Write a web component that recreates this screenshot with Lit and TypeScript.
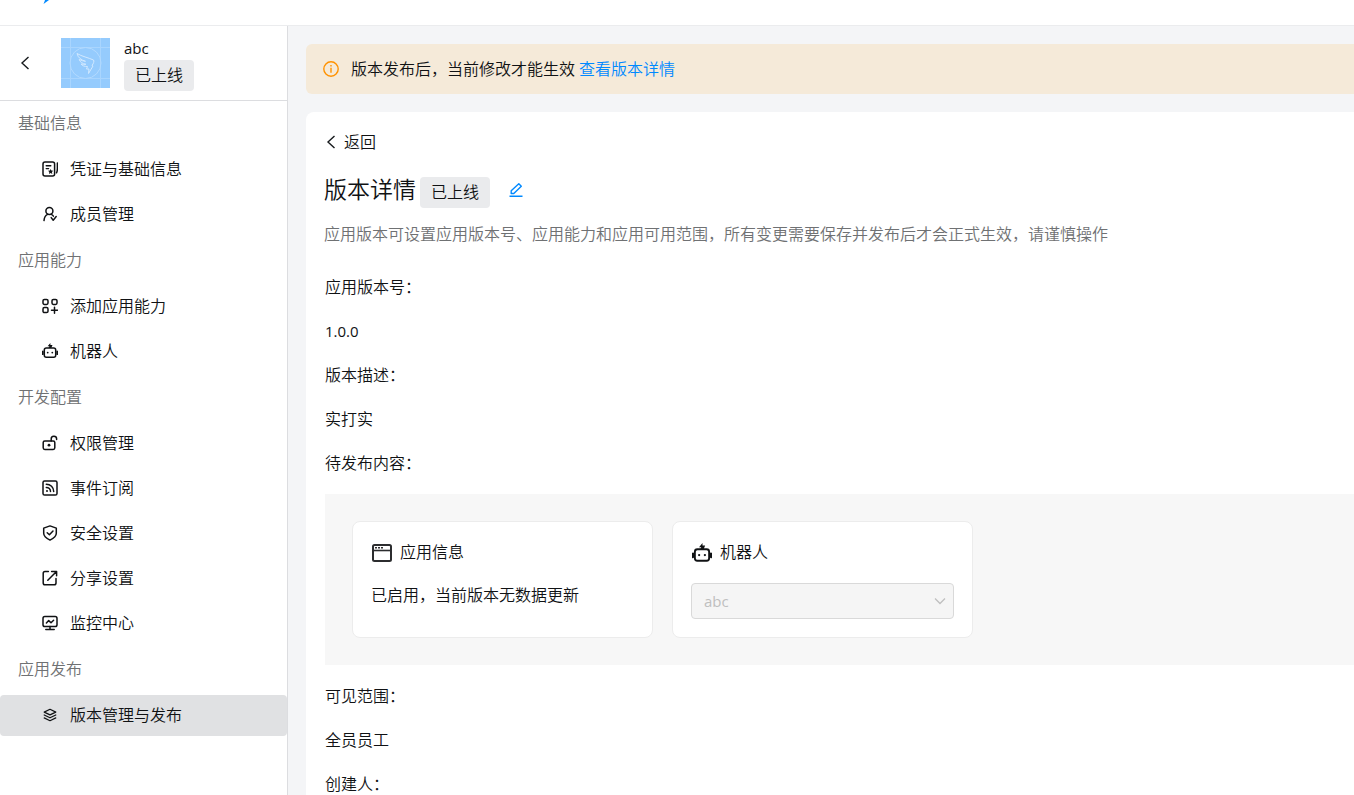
import { LitElement, html, css, svg, TemplateResult } from "lit";
import { customElement, state } from "lit/decorators.js";

const ICONS: Record<string, TemplateResult> = {
  credential: svg`
    <rect x="1" y="1" width="11.6" height="14" rx="2"/>
    <path d="M15.4 2v5.2c0 2.2-.2 3.4-.9 4.6"/>
    <path d="M4.2 4.7h4.6M4.2 7.6h2.4" stroke-width="1.4"/>
    <path class="solid" d="m8.6 7.9.8 1.7 1.9.2-1.4 1.3.4 1.9-1.7-1-1.6 1 .3-1.9L6 9.8l1.9-.2z"/>`,
  member: svg`
    <circle cx="7.4" cy="4.9" r="3.5"/>
    <path d="M2 14.6c.3-3.6 1.6-5.3 3.6-6.2M9.2 8.4c1 .4 1.6.9 2.2 1.7M9.2 11.6l2 2.6 3-3.6"/>`,
  ability: svg`
    <rect x="1" y="1.4" width="5" height="5" rx="1.4"/>
    <rect x="10" y="1.4" width="5" height="5" rx="1.4"/>
    <rect x="1" y="9.6" width="5" height="5" rx="1.4"/>
    <path d="M12.5 9.2v6M9.5 12.2h6"/>`,
  robot: svg`
    <rect x="2.3" y="5" width="11.4" height="9.2" rx="2"/>
    <path d="M.8 8.4v2.8M15.2 8.4v2.8" stroke-width="1.8"/>
    <path class="solid" d="M8.4 0v1.9h2.1L9.3 5H6.6l.8-1.7H5.6z"/>
    <circle class="solid" cx="5.7" cy="9.6" r=".9"/><circle class="solid" cx="10.3" cy="9.6" r=".9"/>`,
  lock: svg`
    <rect x="1.2" y="6" width="11.6" height="8.4" rx="1.6"/>
    <path d="M9.2 6V4a2.7 2.7 0 0 1 5.4-.2v.8"/>
    <circle class="solid" cx="7" cy="10.2" r="1.4"/>`,
  feed: svg`
    <rect x="1" y="1" width="14" height="14" rx="1.6"/>
    <path d="M4.3 4.2c4.2 0 7.4 3.2 7.4 7.4M4.3 7.4c2.4 0 4.2 1.8 4.2 4.2"/>
    <circle class="solid" cx="5" cy="11" r="1"/>`,
  shield: svg`
    <path d="m8 .9 6.3 2.2v5.2c0 2.8-2.2 4.9-6.3 6.8-4.1-1.9-6.3-4-6.3-6.8V3.1z"/>
    <path d="m5.2 7.7 2.2 2.1L11 6.1"/>`,
  share: svg`
    <path d="M6.4 1.6H3a1.8 1.8 0 0 0-1.8 1.8V13A1.8 1.8 0 0 0 3 14.8h9.2A1.8 1.8 0 0 0 14 13V8.6"/>
    <path d="M5.8 10.2 14 2M9.6 1.4h5v4.4"/>`,
  monitor: svg`
    <rect x="1" y="1.6" width="14" height="10" rx="1.8"/>
    <path d="m4.4 8 2.3-2.4L9 7.8l2.6-2.6M8 11.6v2.6M3.8 14.5h8.4"/>`,
  layers: svg`
    <path d="m8 2.3 5.8 2.8L8 7.9 2.2 5.1z" stroke-width="1.2"/>
    <path d="M2.2 8 8 10.8 13.8 8M2.2 10.9 8 13.7l5.8-2.8" stroke-width="1.2"/>`,
};

function icon(name: string, size = "small") {
  return html`<svg class="icon ${size}" viewBox="0 0 16 16" aria-hidden="true">${ICONS[name]}</svg>`;
}

const chevronLeft = html`<svg class="chevron" viewBox="0 0 10 14" aria-hidden="true"><path d="M8.5 1 2 7l6.5 6"/></svg>`;

interface MenuItem { key: string; label: string; icon: string; }
interface MenuGroup { title: string; items: MenuItem[]; }

const MENU: MenuGroup[] = [
  { title: "基础信息", items: [
    { key: "base", label: "凭证与基础信息", icon: "credential" },
    { key: "member", label: "成员管理", icon: "member" },
  ]},
  { title: "应用能力", items: [
    { key: "ability", label: "添加应用能力", icon: "ability" },
    { key: "robot", label: "机器人", icon: "robot" },
  ]},
  { title: "开发配置", items: [
    { key: "permission", label: "权限管理", icon: "lock" },
    { key: "event", label: "事件订阅", icon: "feed" },
    { key: "security", label: "安全设置", icon: "shield" },
    { key: "share", label: "分享设置", icon: "share" },
    { key: "monitor", label: "监控中心", icon: "monitor" },
  ]},
  { title: "应用发布", items: [
    { key: "version", label: "版本管理与发布", icon: "layers" },
  ]},
];

@customElement("app-root")
export class AppRoot extends LitElement {
  @state() private active = "version";

  static styles = css`
    :host {
      display: flex;
      flex-direction: column;
      height: 100vh;
      overflow: hidden;
      background: #fff;
      color: #101214;
      font: 350 16px/24px "Open Sans", "Noto Sans CJK SC", sans-serif;
    }
    * { box-sizing: border-box; }
    h1, h2, p, dl, dd, dt, ul { margin: 0; padding: 0; font-size: inherit; font-weight: inherit; }
    ul { list-style: none; }
    a { color: inherit; text-decoration: none; }
    button { border: 0; padding: 0; background: none; color: inherit; font: inherit; cursor: pointer; }

    .icon { flex: none; fill: none; stroke: currentColor; stroke-width: 1.5; stroke-linecap: round; stroke-linejoin: round; }
    .icon .solid { fill: currentColor; stroke: none; }
    .small { width: 16px; height: 16px; }
    .large { width: 20px; height: 20px; }
    .chevron { display: block; width: 10px; height: 14px; fill: none; stroke: #171a1d; stroke-width: 1.4; }
    .badge { padding: 0 11px; border-radius: 4px; background: #eaebed; line-height: 31px; white-space: nowrap; }
    .latin { font-size: 15px; font-weight: 400; }

    .topbar { flex: none; display: flex; height: 26px; padding-left: 42px; border-bottom: 1px solid #ebecee; }
    .logo { width: 8px; height: 4px; fill: #0089ff; }
    .body { flex: 1; min-height: 0; display: flex; }

    .sidebar { flex: none; width: 288px; border-right: 1px solid #dcdde0; }
    .app { display: flex; align-items: center; height: 75px; padding-left: 20px; border-bottom: 1px solid #dcdde0; }
    .avatar { width: 49px; height: 50px; margin: 0 14px 0 31px; background: #95cbfd; fill: none; stroke: #bfe0ff; }
    .app-info { display: flex; flex-direction: column; align-items: flex-start; }
    .menu { padding-top: 1px; }
    .group-title { height: 47px; padding: 0 18px 4px; color: #6f7173; line-height: 42px; }
    .item { display: flex; align-items: center; gap: 12px; height: 41px; margin-bottom: 4px; padding: 0 42px 2px; border-radius: 4px; }
    .item.active { background: #e0e1e3; }

    .main { flex: 1; min-width: 0; display: flex; flex-direction: column; gap: 18px; padding: 18px 0 0 18px; background: #f4f5f7; }
    .notice { flex: none; display: flex; align-items: center; height: 50px; padding-left: 17px; border-radius: 6px 0 0 6px; background: #f5ead9; }
    .notice svg { width: 16px; height: 16px; margin-right: 12px; fill: none; stroke: #ff9200; stroke-width: 1.4; }
    .link { margin-left: 4px; color: #0089ff; }
    .panel { flex: 1 0 auto; padding: 18px; padding-right: 0; border-radius: 8px 0 0 0; background: #fff; }
    .back { display: flex; align-items: center; gap: 8px; padding-left: 2px; }
    .heading { display: flex; align-items: baseline; gap: 4px; margin: 17px 0 14px; }
    .title { font-size: 23px; line-height: 36px; }
    .edit { margin-left: 14px; color: #0089ff; line-height: 16px; }
    .edit svg { display: block; width: 16px; height: 16px; fill: none; stroke: currentColor; stroke-width: 1.4; stroke-linejoin: round; }
    .desc { color: #6f7173; }
    .details { margin-top: 19px; padding-left: 1px; }
    .row { line-height: 44px; }
    .content { display: grid; grid-template-columns: repeat(auto-fill, 301px); gap: 19px; margin: 9px 0; padding: 27px; background: #f7f7f7; line-height: 25px; }
    .card { padding: 18px; border: 1px solid #ececec; border-radius: 8px; background: #fff; }
    .card-head { display: flex; align-items: center; gap: 8px; height: 25px; margin-bottom: 18px; padding-left: 1px; }
    .window { width: 20px; height: 20px; fill: none; stroke: #2c2d2f; stroke-width: 2; }
    .select { position: relative; height: 36px; }
    .select select { width: 100%; height: 36px; padding: 0 12px; border: 1px solid #d9d9d9; border-radius: 4px; background: #f5f5f5; color: #bfbfbf; font-family: inherit; opacity: 1; appearance: none; }
    .select svg { position: absolute; right: 8px; top: 12px; width: 12px; height: 12px; fill: none; stroke: #bfbfbf; stroke-width: 1.3; pointer-events: none; }
  `;

  private pick(event: Event, key: string) {
    event.preventDefault();
    this.active = key;
  }

  private renderSidebar() {
    return html`
      <aside class="sidebar">
        <div class="app">
          <button aria-label="返回应用列表">${chevronLeft}</button>
          <svg class="avatar" viewBox="0 0 49 50" aria-hidden="true">
            <path d="M9.5 0v50M39.5 0v50M0 9.5h49M0 40.5h49" stroke="#a9d5fe"/>
            <circle cx="24.5" cy="25" r="15.5" stroke="#b3daff"/>
            <path stroke="#d2e9ff" d="M16 15.5c5 3 11 4 16.5 6.500 1 1 0 3.500-1.500 5.500l1 .5-4.500 7.500.5-4.500h-2.500l1-2.500c-3 0-5-.5-6.500-2.500 2 .5 3.500.5 5 .3-3.500-.8-6-2-6.800-4.800 2 1 4 1.500 6.300 1.800-4-1.300-7.500-3.300-8.500-7.800z"/>
          </svg>
          <div class="app-info">
            <span class="latin">abc</span>
            <span class="badge">已上线</span>
          </div>
        </div>
        <nav class="menu">
          ${MENU.map((group) => html`
            <h2 class="group-title">${group.title}</h2>
            <ul>
              ${group.items.map((item) => html`
                <li>
                  <a class="item ${item.key === this.active ? "active" : ""}" href="#${item.key}"
                    @click=${(e: Event) => this.pick(e, item.key)}>${icon(item.icon)}<span>${item.label}</span></a>
                </li>`)}
            </ul>`)}
        </nav>
      </aside>`;
  }

  render() {
    return html`
      <header class="topbar">
        <svg class="logo" viewBox="0 0 8 4" aria-hidden="true"><path d="M3 0h4L1.5 4l1-2.5z"/></svg>
      </header>
      <div class="body">
        ${this.renderSidebar()}
        <main class="main">
          <div class="notice" role="status">
            <svg viewBox="0 0 16 16" aria-hidden="true"><circle cx="8" cy="8" r="7.2"/><path d="M8 6.8v5M8 4v1.6"/></svg>
            <span>版本发布后，当前修改才能生效</span><a class="link" href="#detail">查看版本详情</a>
          </div>
          <section class="panel">
            <button class="back">${chevronLeft}<span>返回</span></button>
            <div class="heading">
              <h1 class="title">版本详情</h1>
              <span class="badge">已上线</span>
              <button class="edit" aria-label="编辑">
                <svg viewBox="0 0 16 16" aria-hidden="true"><path d="M3.2 11.5V8.8l7.6-7.1 2.5 2.5-7.5 7.3zM1.5 14.3h13"/></svg>
              </button>
            </div>
            <p class="desc">应用版本可设置应用版本号、应用能力和应用可用范围，所有变更需要保存并发布后才会正式生效，请谨慎操作</p>
            <dl class="details">
              <dt class="row">应用版本号：</dt><dd class="row latin">1.0.0</dd>
              <dt class="row">版本描述：</dt><dd class="row">实打实</dd>
              <dt class="row">待发布内容：</dt>
              <dd class="content">
                <div class="card">
                  <div class="card-head">
                    <svg class="window" viewBox="0 0 20 20" aria-hidden="true"><rect x="1" y="2" width="18" height="16" rx="1.5"/><path d="M1 7.5h18" stroke-width="1.6"/><path d="M3 4.7h8" stroke-width="1.4" stroke-dasharray="2 1"/></svg>
                    <span>应用信息</span>
                  </div>
                  <p>已启用，当前版本无数据更新</p>
                </div>
                <div class="card">
                  <label class="card-head" for="robot">${icon("robot", "large")}<span>机器人</span></label>
                  <div class="select">
                    <select id="robot" class="latin" disabled><option>abc</option></select>
                    <svg viewBox="0 0 12 12" aria-hidden="true"><path d="m1 3.500 5 5 5-5"/></svg>
                  </div>
                </div>
              </dd>
              <dt class="row">可见范围：</dt><dd class="row">全员员工</dd>
              <dt class="row">创建人：</dt>
            </dl>
          </section>
        </main>
      </div>`;
  }
}
